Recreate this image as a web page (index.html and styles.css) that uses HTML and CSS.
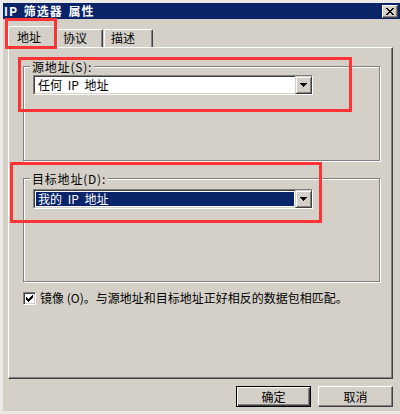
FILE: index.html
```html
<!DOCTYPE html>
<html lang="zh-CN">
<head>
<meta charset="utf-8">
<title>IP 筛选器 属性</title>
<link rel="stylesheet" href="styles.css">
</head>
<body>
<div class="window">
  <div class="titlebar">
    <span class="title">IP 筛选器 属性</span>
    <button class="close" aria-label="关闭">
      <svg width="8" height="7" viewBox="0 0 8 7"><path d="M0 0h2v1h1v1h2V1h1V0h2v1H7v1H6v1H5v1h1v1h1v1h1v1H6V6H5V5H3v1H2v1H0V6h1V5h1V4h1V3H2V2H1V1H0z" fill="#000"/></svg>
    </button>
  </div>
  <div class="content">
    <div class="tabs">
      <div class="tab active">地址</div>
      <div class="tab t2">协议</div>
      <div class="tab t3">描述</div>
    </div>
    <div class="panel">
      <div class="group g1">
        <div class="legend">源地址(S):</div>
        <div class="combo c1">
          <div class="field"><span class="val">任何 IP 地址</span></div>
          <div class="drop"><svg width="7" height="4" viewBox="0 0 7 4"><path d="M0 0h7v1H6v1H5v1H4v1H3V3H2V2H1V1H0z" fill="#000"/></svg></div>
        </div>
      </div>
      <div class="group g2">
        <div class="legend">目标地址(D):</div>
        <div class="combo c2">
          <div class="field"><span class="val sel">我的 IP 地址</span></div>
          <div class="drop"><svg width="7" height="4" viewBox="0 0 7 4"><path d="M0 0h7v1H6v1H5v1H4v1H3V3H2V2H1V1H0z" fill="#000"/></svg></div>
        </div>
      </div>
      <div class="checkrow">
        <span class="check"><svg width="7" height="7" viewBox="0 0 7 7"><path d="M6 0h1v3H6v1H5v1H4v1H3v1H2V6H1V5H0V2h1v1h1v1h1V3h1V2h1V1h1z" fill="#000"/></svg></span>
        <span class="checklabel">镜像 (O)。与源地址和目标地址正好相反的数据包相匹配。</span>
      </div>
    </div>
    <div class="buttons">
      <button class="btn default">确定</button>
      <button class="btn">取消</button>
    </div>
  </div>
  <div class="mark m1"></div>
  <div class="mark m2"></div>
  <div class="mark m3"></div>
</div>
</body>
</html>
```
FILE: styles.css
```css
* { box-sizing: border-box; }
html, body { margin: 0; padding: 0; }
body {
  width: 400px;
  height: 414px;
  background: #ECEAE6;
  font-family: "Noto Sans CJK SC", "Liberation Sans", sans-serif;
  font-size: 12px;
  color: #000;
}
.window {
  position: relative;
  width: 400px;
  height: 414px;
  padding: 3px 0 3px 3px;
  background: #ECEAE6;
}
.titlebar {
  height: 16px;
  background: #0A246A;
  display: flex;
  align-items: center;
  justify-content: space-between;
  padding: 0 2px 0 1px;
}
.title {
  color: #fff;
  font-weight: bold;
  font-size: 12px;
  line-height: 16px;
  letter-spacing: 1px;
  word-spacing: 2px;
}
.close {
  width: 16px;
  height: 13px;
  padding: 0;
  margin: 0;
  background: #D4D0C8;
  border: 1px solid;
  border-color: #fff #404040 #404040 #fff;
  box-shadow: inset -1px -1px 0 #808080;
  display: flex;
  align-items: center;
  justify-content: center;
}
.content {
  height: 392px;
  background: #D4D0C8;
  display: flex;
  flex-direction: column;
  padding: 0 7px 0 5px;
}
.tabs {
  height: 28px;
  display: flex;
  align-items: flex-end;
  position: relative;
  z-index: 2;
}
.tab {
  height: 18px;
  line-height: 16px;
  padding: 0 0 0 7px;
  border: 1px solid;
  border-color: #fff #404040 transparent #fff;
  border-bottom: none;
  border-radius: 2px 2px 0 0;
  box-shadow: inset -1px 0 0 #808080;
  background: #D4D0C8;
}
.tab.active {
  width: 48px;
  height: 22px;
  line-height: 20px;
  padding-left: 8px;
  margin-bottom: -1px;
}
.tab.t2 { width: 46px; margin-left: 1px; padding-left: 5px; }
.tab.t3 { width: 49px; margin-left: 1px; padding-left: 6px; }
.panel {
  height: 332px;
  border: 1px solid;
  border-color: #fff #404040 #404040 #fff;
  box-shadow: inset -1px -1px 0 #808080;
  padding: 18px 12px 0 14px;
  display: flex;
  flex-direction: column;
}
.group {
  border: 1px solid #808080;
  box-shadow: inset 1px 1px 0 #fff, 1px 1px 0 #fff;
  display: flex;
  flex-direction: column;
  align-items: flex-start;
}
.g1 { height: 95px; width: 357px; }
.g2 { height: 104px; width: 357px; margin-top: 17px; }
.legend {
  margin: -8px 0 0 6px;
  padding: 0 2px;
  background: #D4D0C8;
  line-height: 15px;
  height: 15px;
  letter-spacing: 0.8px;
}
.combo {
  width: 280px;
  height: 20px;
  margin-left: 9px;
  border: 1px solid;
  border-color: #808080 #fff #fff #808080;
  display: flex;
  position: relative;
}
.c1 { margin-top: 1px; }
.c2 { margin-top: 3px; }
.field {
  flex: 1;
  background: #fff;
  border: 1px solid;
  border-color: #404040 #D4D0C8 #D4D0C8 #404040;
  border-right: none;
  padding: 1px;
  display: flex;
}
.val {
  flex: 1;
  line-height: 14px;
  padding-left: 2px;
  word-spacing: 3px;
}
.val.sel {
  background: #0A246A;
  color: #fff;
}
.drop {
  width: 17px;
  height: 18px;
  background: #D4D0C8;
  border: 1px solid;
  border-color: #D4D0C8 #404040 #404040 #D4D0C8;
  box-shadow: inset 1px 1px 0 #fff, inset -1px -1px 0 #808080;
  display: flex;
  align-items: center;
  justify-content: center;
}
.checkrow {
  margin-top: 9px;
  display: flex;
  align-items: center;
  height: 14px;
}
.check {
  width: 13px;
  height: 13px;
  background: #fff;
  border: 1px solid;
  border-color: #808080 #fff #fff #808080;
  box-shadow: inset 1px 1px 0 #404040, inset -1px -1px 0 #D4D0C8;
  display: flex;
  align-items: center;
  justify-content: center;
}
.checklabel {
  margin-left: 4px;
  line-height: 14px;
  white-space: nowrap;
}
.buttons {
  display: flex;
  justify-content: flex-end;
  gap: 7px;
  margin-top: 7px;
}
.btn {
  width: 75px;
  height: 21px;
  padding: 0;
  font-family: inherit;
  font-size: 12px;
  color: #000;
  background: #D4D0C8;
  border: 1px solid;
  border-color: #fff #404040 #404040 #fff;
  box-shadow: inset -1px -1px 0 #808080;
}
.btn.default {
  border: 1px solid #000;
  box-shadow: inset 1px 1px 0 #fff, inset -1px -1px 0 #404040, inset -2px -2px 0 #808080;
}
.mark {
  position: absolute;
  border: 3px solid #F33;
  pointer-events: none;
  z-index: 5;
}
.m1 { left: 5px; top: 18px; width: 52px; height: 31px; }
.m2 { left: 18px; top: 57px; width: 334px; height: 55px; }
.m3 { left: 10px; top: 162px; width: 312px; height: 61px; }
```
